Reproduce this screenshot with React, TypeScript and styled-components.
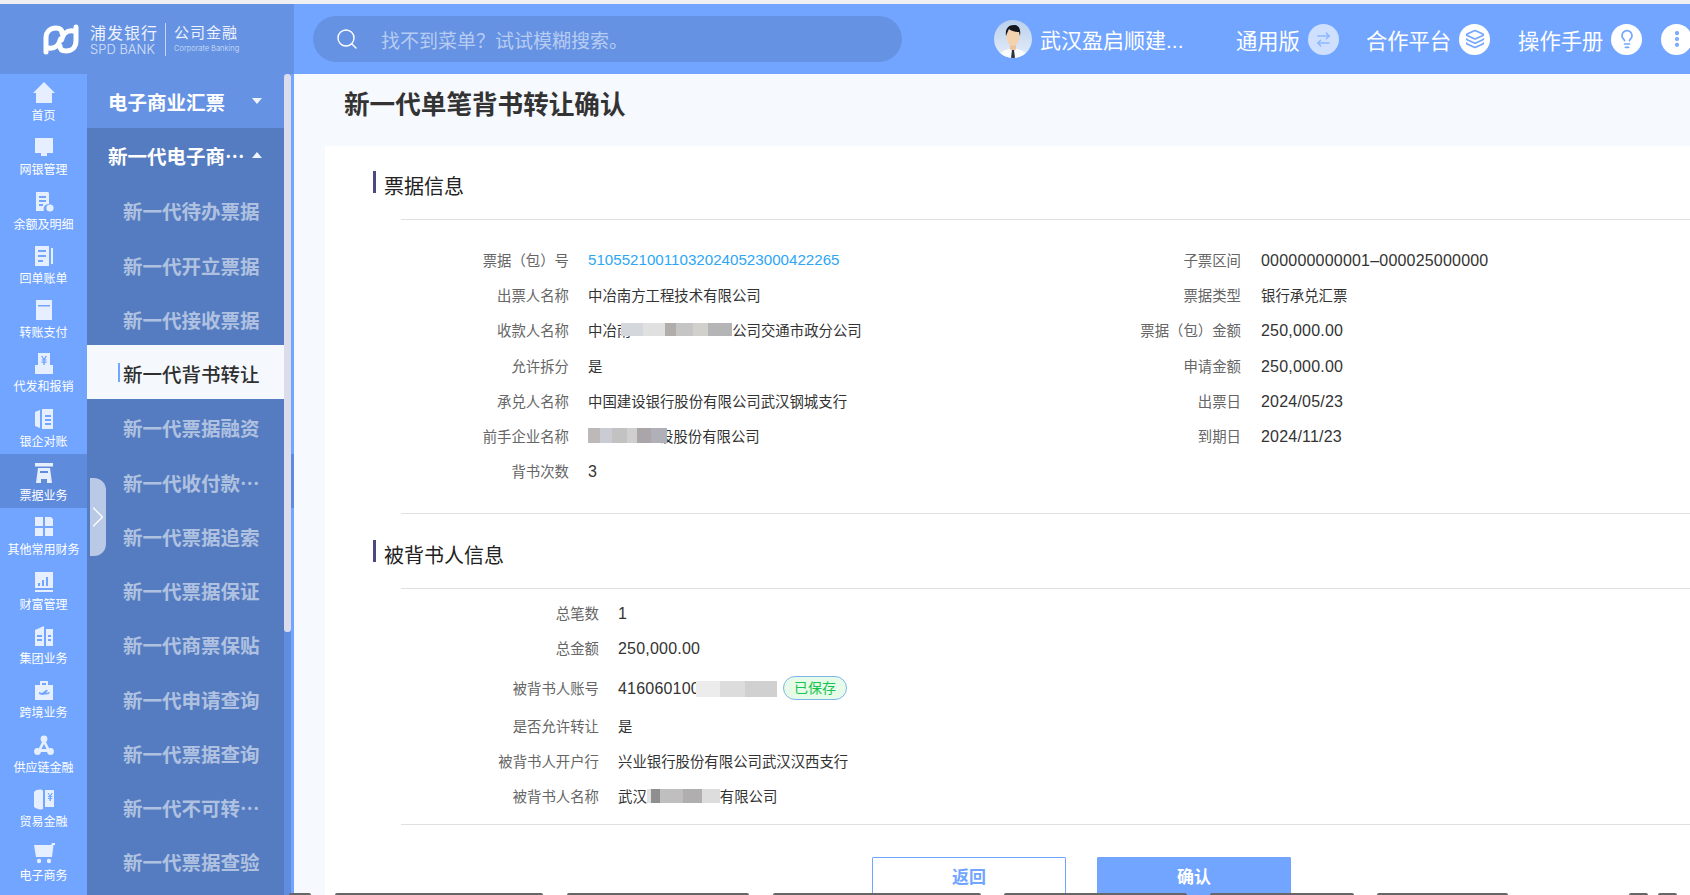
import React from 'react'
import styled, { createGlobalStyle } from 'styled-components'
import { ArrowRightLeft, ChevronRight, EllipsisVertical, Layers, Lightbulb, Search } from 'lucide-react'

const GlobalStyle = createGlobalStyle`
	html, body {
		margin: 0;
		padding: 0;
		background: #fff;
		font-family: 'Liberation Sans', 'Noto Sans CJK SC', sans-serif;
	}
`

const Page = styled.div`
	position: relative;
	width: 1690px;
	height: 895px;
	overflow: hidden;
	background: #fff;
`

const TopStrip = styled.div`
	height: 4px;
	background: #f0f0f2;
`

const Header = styled.header`
	display: flex;
	align-items: center;
	height: 70px;
	background: #72a5ff;
	color: #fff;
`

const LogoArea = styled.div`
	display: flex;
	align-items: center;
	flex: 0 0 294px;
	height: 100%;
	box-sizing: border-box;
	padding-left: 42px;
	background: #6592e3;
`

const LogoText = styled.div`
	display: flex;
	flex-direction: column;
	align-items: flex-start;
	margin-left: ${(p: { $left: number }) => p.$left}px;
`

const LogoCn = styled.span`
	font-family: 'Noto Sans CJK SC', sans-serif;
	font-size: ${(p: { $size: number }) => p.$size}px;
	line-height: 20px;
	letter-spacing: 1px;
	color: #eef3fd;
	white-space: nowrap;
`

const LogoEn = styled.span`
	font-family: 'Inter', 'Liberation Sans', sans-serif;
	font-size: ${(p: { $size: number }) => p.$size}px;
	font-weight: 300;
	line-height: 14px;
	color: #d5e1f8;
	white-space: nowrap;
`

const LogoDivider = styled.div`
	width: 1px;
	height: 33px;
	margin: 0 8px 0 7px;
	background: #c4d5f4;
`

const SearchBox = styled.div`
	display: flex;
	align-items: center;
	flex: 0 0 589px;
	height: 46px;
	box-sizing: border-box;
	margin-left: 19px;
	padding-left: 22px;
	border-radius: 23px;
	background: #6592e3;
	color: #fff;
`

const Placeholder = styled.span`
	margin-left: 22px;
	font-size: 19px;
	color: rgba(255, 255, 255, 0.55);
	white-space: nowrap;
`

const Avatar = styled.svg`
	flex: 0 0 38px;
	width: 38px;
	height: 38px;
	margin-left: 92px;
`

const UserName = styled.span`
	flex: 0 0 145px;
	margin-left: 8px;
	font-size: 21px;
	white-space: nowrap;
`

const HeaderLink = styled.div`
	display: flex;
	align-items: center;
	flex: none;
	gap: 8px;
	margin-left: ${(p: { $left: number }) => p.$left}px;
	font-size: 21.3px;
	white-space: nowrap;
`

const RoundIcon = styled.span`
	display: flex;
	align-items: center;
	justify-content: center;
	flex: 0 0 31px;
	width: 31px;
	height: 31px;
	border-radius: 50%;
	background: ${(p: { $soft?: boolean }) => (p.$soft ? '#cfe0ff' : '#fff')};
	color: ${(p: { $soft?: boolean }) => (p.$soft ? '#8fb6ff' : '#72a5ff')};
`

const Body = styled.div`
	display: flex;
	height: 821px;
`

const Rail = styled.nav`
	flex: 0 0 87px;
	background: #72a5ff;
`

const RailItem = styled.div`
	display: flex;
	flex-direction: column;
	align-items: center;
	height: 54.3px;
	box-sizing: border-box;
	padding-top: 7px;
	background: ${(p: { $active?: boolean }) => (p.$active ? '#5f8bdc' : 'transparent')};
	color: #fff;
	font-size: 12px;
	line-height: 22px;
	white-space: nowrap;
`

const RailIcon = styled.svg`
	display: block;
	flex: none;
	width: 24px;
	height: 24px;
	fill: #e6efff;
`

const SubMenu = styled.div`
	flex: 0 0 197px;
	background: #557cc0;
	font-family: 'Noto Sans CJK SC', sans-serif;
	font-size: 19.5px;
	font-weight: 700;
	white-space: nowrap;
`

const MenuHead = styled.div`
	display: flex;
	align-items: center;
	justify-content: space-between;
	height: ${(p: { $top?: boolean }) => (p.$top ? '54px' : '54.25px')};
	box-sizing: border-box;
	padding: 0 22px 0 21px;
	background: ${(p: { $top?: boolean }) => (p.$top ? '#6592e3' : 'transparent')};
	color: #fff;
`

const Caret = styled.i`
	width: 0;
	height: 0;
	border-left: 5.5px solid transparent;
	border-right: 5.5px solid transparent;
	border-top: ${(p: { $up?: boolean }) => (p.$up ? '0' : '6px solid #f0f4fc')};
	border-bottom: ${(p: { $up?: boolean }) => (p.$up ? '6px solid #f0f4fc' : '0')};
`

const MenuItem = styled.div`
	position: relative;
	height: 54.25px;
	padding-left: 36px;
	line-height: 58px;
	background: ${(p: { $active?: boolean }) => (p.$active ? '#f5f9fd' : 'transparent')};
	color: ${(p: { $active?: boolean }) => (p.$active ? '#2f2f2f' : 'rgba(255, 255, 255, 0.55)')};
	font-weight: ${(p: { $active?: boolean }) => (p.$active ? 500 : 700)};
`

const ActiveMark = styled.i`
	position: absolute;
	left: 31px;
	top: 18px;
	width: 2px;
	height: 19px;
	background: #72a5ff;
`

const ScrollTrack = styled.div`
	flex: 0 0 7px;
	background: #618ddf;
`

const ScrollThumb = styled.div`
	height: 558px;
	border-radius: 3px;
	background: #dcdcec;
`

const RailEdge = styled.div`
	flex: 0 0 3px;
	background: linear-gradient(#72a5ff 380px, #5f8bdc 380px, #5f8bdc 434px, #72a5ff 434px);
`

const CollapseHandle = styled.button`
	position: absolute;
	left: 90px;
	top: 478px;
	display: flex;
	align-items: center;
	justify-content: center;
	width: 16px;
	height: 78px;
	padding: 0;
	border: 0;
	border-radius: 0 12px 12px 0;
	background: #b9c9e6;
	color: #fff;

	svg {
		flex: none;
	}
`

const Main = styled.main`
	flex: 1;
	min-width: 0;
	background: #f6f9fe;
`

const PageTitle = styled.h1`
	margin: 0;
	height: 72px;
	box-sizing: border-box;
	padding: 13px 0 0 50px;
	font-size: 25.6px;
	line-height: 36px;
	font-weight: 700;
	color: #333;
`

const Panel = styled.div`
	height: 760px;
	margin-left: 31px;
	padding-top: 25px;
	box-sizing: border-box;
	background: #fff;
`

const SectionHead = styled.div`
	display: flex;
	height: 48px;
	box-sizing: border-box;
	margin-left: 48px;
`

const SectionMark = styled.i`
	flex: 0 0 3px;
	height: 22px;
	background: #4a4a80;
`

const SectionTitle = styled.h2`
	margin: 3px 0 0 8px;
	font-size: 20px;
	line-height: 26px;
	font-weight: 400;
	color: #222;
`

const Rule = styled.div`
	height: 1px;
	margin-left: 76px;
	margin-top: ${(p: { $top?: number }) => p.$top ?? 0}px;
	background: #e0e0e0;
`

const FieldGrid = styled.div`
	display: flex;
	margin-left: 76px;
	padding-top: 22px;
`

const FieldColumn = styled.div`
	flex: 0 0 672px;
`

const Field = styled.div`
	display: flex;
	align-items: center;
	height: ${(p: { $height?: number }) => p.$height ?? 35.2}px;
	margin: ${(p: { $tall?: boolean }) => (p.$tall ? '5px 0 3px' : '0')};
`

const FieldLabel = styled.span`
	flex: 0 0 ${(p: { $width: number }) => p.$width}px;
	text-align: right;
	font-size: 14.4px;
	color: #666;
`

const FieldValue = styled.span`
	display: flex;
	align-items: center;
	margin-left: ${(p: { $gap?: number }) => p.$gap ?? 19}px;
	padding-top: ${(p: { $num?: boolean }) => (p.$num ? '3px' : '0')};
	font-size: ${(p: { $num?: boolean }) => (p.$num ? '16px' : '14.4px')};
	letter-spacing: ${(p: { $num?: boolean }) => (p.$num ? '0.2px' : '0')};
	color: #333;
	white-space: nowrap;
`

const LinkValue = styled(FieldValue)`
	font-size: 15.15px;
	color: #2ea6f5;
`

const Mosaic = styled.i`
	position: relative;
	z-index: 1;
	display: inline-block;
	flex: none;
	width: ${(p: { $w: number }) => p.$w}px;
	height: ${(p: { $h: number }) => p.$h}px;
	margin-left: ${(p: { $ml?: number }) => p.$ml ?? 0}px;
	margin-right: ${(p: { $mr?: number }) => p.$mr ?? 0}px;
	background: ${(p: { $tones: string }) => p.$tones};
	filter: blur(0.7px);
`

const SavedBadge = styled.span`
	margin-left: 6px;
	width: 64px;
	height: 24px;
	box-sizing: border-box;
	border: 1px solid #7db6ee;
	border-radius: 12px;
	background: #e6fbe8;
	color: #16c44f;
	font-size: 14px;
	line-height: 22px;
	text-align: center;
`

const SubPanel = styled.div`
	padding: 6px 0 11px;
	margin-left: 76px;
`

const SectionGap = styled.div`
	height: 26px;
`

const Actions = styled.div`
	display: flex;
	gap: 31px;
	margin: 32px 0 0 547px;
`

const ActionButton = styled.button`
	width: 194px;
	height: 40px;
	padding: 0 0 4px;
	border: 1px solid #72a5ff;
	border-radius: 1px;
	background: ${(p: { $primary?: boolean }) => (p.$primary ? '#72a5ff' : '#fff')};
	color: ${(p: { $primary?: boolean }) => (p.$primary ? '#fff' : '#72a5ff')};
	font-family: 'Noto Sans CJK SC', sans-serif;
	font-size: 17px;
	font-weight: 700;
`

const PeekBar = styled.i`
	position: absolute;
	bottom: 0;
	left: ${(p: { $x: number; $w: number }) => p.$x}px;
	width: ${(p: { $x: number; $w: number }) => p.$w}px;
	height: 2px;
	border-radius: 3px 3px 0 0;
	background: #666;
`

const railIcons: Record<string, React.ReactNode> = {
	首页: <path d="M12 1 23 12h-3v10H4V12H1z" />,
	网银管理: <path d="M3 3h18v15h-6v3H9v-3H3z" />,
	余额及明细: (
		<>
			<path fillRule="evenodd" d="M4 2h12l1 1v11a5 5 0 0 0-5 7H4zm3 4v2h7V6zm0 4v2h7v-2zm0 4v2h4v-2z" />
			<circle cx="18" cy="18" r="3.6" />
		</>
	),
	回单账单: <path fillRule="evenodd" d="M3 2h14v20H3zm3 4v2h8V6zm0 5v2h8v-2zm0 5v2h5v-2zM19 4h2v16h-2z" />,
	转账支付: <path fillRule="evenodd" d="M4 2h16v20H4zm2 5v1.5h12V7z" />,
	代发和报销: (
		<path
			fillRule="evenodd"
			d="M6 1h12v12h3v9H3v-9h3zm3 3 2.2 3.4H9.500v1.200h1.900v1H9.500v1.200h1.900V13h1.400v-2.200h1.900V9.600h-1.900v-1h1.900V7.400h-1.700L15 4h-1.500L12 6.400 10.500 4z"
		/>
	),
	银企对账: <path fillRule="evenodd" d="M3 5l5-2v18l-5-2zM10 2h11v20H10zm3 6v2h6V8zm0 4v2h6v-2zm0 4v2h6v-2z" />,
	票据业务: <path fillRule="evenodd" d="M3 2h18v3.500H3zM6 7h12l2 15h-5v-4H9v4H4zm2 3v2h8v-2z" />,
	其他常用财务: <path d="M3 2h8v9H3zM13 2h6l2 2v7h-8zM3 13h8v8H3zM13 13h8v8h-8z" />,
	财富管理: <path fillRule="evenodd" d="M3 2h18v16H3zm3 11v3h2v-3zm4-3v6h2v-6zm4-3v9h2V7zM3 20h18v2H3z" />,
	集团业务: <path fillRule="evenodd" d="M3 6l9-4v20H3zm2 5v2h5v-2zm0 4v2h5v-2zm9-10h7v17h-7zm2 6v2h3v-2zm0 4v2h3v-2z" />,
	跨境业务: <path fillRule="evenodd" d="M8 3h8v4h5v15H3V7h5zm2 2v2h4V5zm-3 9 3 1 4-3h2l-2 3 4-1-1 2-7 1-3-1z" />,
	供应链金融: (
		<>
			<path d="M12 5 5 19h14zm0 6 2.500 5h-5z" fillRule="evenodd" />
			<circle cx="12" cy="6" r="3.400" />
			<circle cx="5.500" cy="18.500" r="3.400" />
			<circle cx="18.500" cy="18.500" r="3.400" />
		</>
	),
	贸易金融: (
		<path
			fillRule="evenodd"
			d="M2 5c3-3 8-3 9-1v18c-3 1-6 0-9-2zM13 3h9v17h-9zm2.500 3 2 3h-1.500v1h1.500v1h-1.500v1h1.500v2h1.400v-2h1.500v-1H18.900v-1h1.500V9H19l1.800-3h-1.400L18 8.400 16.800 6z"
		/>
	),
	电子商务: (
		<>
			<path d="M2 4h17l1-2h3v2h-1.500L20 16H4z" />
			<circle cx="7" cy="20" r="2.200" />
			<circle cx="17" cy="20" r="2.200" />
		</>
	),
}

const subItems = [
	'新一代待办票据',
	'新一代开立票据',
	'新一代接收票据',
	'新一代背书转让',
	'新一代票据融资',
	'新一代收付款…',
	'新一代票据追索',
	'新一代票据保证',
	'新一代商票保贴',
	'新一代申请查询',
	'新一代票据查询',
	'新一代不可转…',
	'新一代票据查验',
]

const billLeft = [
	{ label: '票据（包）号', link: '510552100110320240523000422265' },
	{ label: '出票人名称', value: '中冶南方工程技术有限公司' },
	{
		label: '收款人名称',
		value: (
			<>
				中冶南
				<Mosaic
					$w={111}
					$h={13}
					$ml={-10}
					$tones="linear-gradient(90deg, #d4d7db 0 20%, #e0e0e0 20% 40%, #b0adab 40% 50%, #c5c5c5 50% 65%, #d2d0cc 65% 78%, #b5b5b8 78% 100%)"
				/>
				公司交通市政分公司
			</>
		),
	},
	{ label: '允许拆分', value: '是' },
	{ label: '承兑人名称', value: '中国建设银行股份有限公司武汉钢城支行' },
	{
		label: '前手企业名称',
		value: (
			<>
				<Mosaic
					$w={79}
					$h={15}
					$mr={-8}
					$tones="linear-gradient(90deg, #bdb9b9 0 15%, #cbcbd3 15% 30%, #c2c2c2 30% 50%, #cfcfcf 50% 62%, #aaa5a8 62% 80%, #b0b0b8 80% 100%)"
				/>
				设股份有限公司
			</>
		),
	},
	{ label: '背书次数', num: '3' },
]

const billRight = [
	{ label: '子票区间', num: '000000000001–000025000000' },
	{ label: '票据类型', value: '银行承兑汇票' },
	{ label: '票据（包）金额', num: '250,000.00' },
	{ label: '申请金额', num: '250,000.00' },
	{ label: '出票日', num: '2024/05/23' },
	{ label: '到期日', num: '2024/11/23' },
]

const peeks = [
	[289, 22],
	[335, 208],
	[567, 182],
	[773, 208],
	[1004, 183],
	[1210, 144],
	[1377, 131],
	[1629, 19],
	[1658, 19],
]

type FieldData = { label: string; value?: React.ReactNode; num?: string; link?: string }

const FieldRow = ({ field, gap }: { field: FieldData; gap?: number }) => (
	<Field>
		<FieldLabel $width={168}>{field.label}</FieldLabel>
		{field.link && <LinkValue $gap={gap}>{field.link}</LinkValue>}
		{field.num && (
			<FieldValue $num $gap={gap}>
				{field.num}
			</FieldValue>
		)}
		{field.value && <FieldValue $gap={gap}>{field.value}</FieldValue>}
	</Field>
)

const SpdLogo = () => (
	<svg width="38" height="33" viewBox="0 0 38 33" fill="none" stroke="#fff" strokeWidth="5" strokeLinecap="round">
		<path d="M4 29V15C4 8 9 5 14 5c4 0 6 2 6 5" />
		<path d="M7 25c6 1 10-3 11.500-9" />
		<path d="M34 4v14c0 7-5 10-10 10-4 0-6-2-6-5" />
		<path d="M31 8c-6-1-10 3-11.500 9" />
	</svg>
)

const AccountAvatar = () => (
	<Avatar viewBox="0 0 38 38">
		<defs>
			<linearGradient id="avatarBg" x1="0" y1="0" x2="0" y2="1">
				<stop offset="0" stopColor="#b9d0ec" />
				<stop offset="1" stopColor="#e6eef9" />
			</linearGradient>
			<clipPath id="avatarClip">
				<circle cx="19" cy="19" r="19" />
			</clipPath>
		</defs>
		<g clipPath="url(#avatarClip)">
			<rect width="38" height="38" fill="url(#avatarBg)" />
			<path d="M4 38c1-6 7-8 11-9h8c4 1 10 3 11 9z" fill="#fbfbfb" />
			<path d="M16 22h6v7l-3 3-3-3z" fill="#eec39c" />
			<ellipse cx="19" cy="17" rx="6.500" ry="9" fill="#f5d2ae" />
			<path d="M12 16c-1-7 2-11 8-11 5 0 7 4 6 11l-1-4c-4 0-8-1-10-3-1 2-2 4-3 7z" fill="#15171c" />
			<path d="M18 30h2l1 8h-4z" fill="#2b3440" />
		</g>
	</Avatar>
)

export default function App() {
	return (
		<Page>
			<GlobalStyle />
			<TopStrip />
			<Header>
				<LogoArea>
					<SpdLogo />
					<LogoText $left={10}>
						<LogoCn $size={16}>浦发银行</LogoCn>
						<LogoEn $size={13}>SPD BANK</LogoEn>
					</LogoText>
					<LogoDivider />
					<LogoText $left={0}>
						<LogoCn $size={15}>公司金融</LogoCn>
						<LogoEn $size={7.5}>Corporate Banking</LogoEn>
					</LogoText>
				</LogoArea>
				<SearchBox>
					<Search size={24} strokeWidth={1.4} />
					<Placeholder>找不到菜单？试试模糊搜索。</Placeholder>
				</SearchBox>
				<AccountAvatar />
				<UserName>武汉盈启顺建...</UserName>
				<HeaderLink $left={51}>
					通用版
					<RoundIcon $soft>
						<ArrowRightLeft size={17} strokeWidth={2} />
					</RoundIcon>
				</HeaderLink>
				<HeaderLink $left={27}>
					合作平台
					<RoundIcon>
						<Layers size={20} strokeWidth={2} />
					</RoundIcon>
				</HeaderLink>
				<HeaderLink $left={28}>
					操作手册
					<RoundIcon>
						<Lightbulb size={20} strokeWidth={2} />
					</RoundIcon>
				</HeaderLink>
				<HeaderLink $left={19}>
					<RoundIcon>
						<EllipsisVertical size={20} strokeWidth={3} />
					</RoundIcon>
				</HeaderLink>
			</Header>
			<Body>
				<Rail>
					{Object.keys(railIcons).map((label) => (
						<RailItem key={label} $active={label === '票据业务'}>
							<RailIcon viewBox="0 0 24 24">{railIcons[label]}</RailIcon>
							{label}
						</RailItem>
					))}
				</Rail>
				<SubMenu>
					<MenuHead $top>
						电子商业汇票
						<Caret />
					</MenuHead>
					<MenuHead>
						新一代电子商…
						<Caret $up />
					</MenuHead>
					{subItems.map((item) => (
						<MenuItem key={item} $active={item === '新一代背书转让'}>
							{item === '新一代背书转让' && <ActiveMark />}
							{item}
						</MenuItem>
					))}
				</SubMenu>
				<ScrollTrack>
					<ScrollThumb />
				</ScrollTrack>
				<RailEdge />
				<Main>
					<PageTitle>新一代单笔背书转让确认</PageTitle>
					<Panel>
						<SectionHead>
							<SectionMark />
							<SectionTitle>票据信息</SectionTitle>
						</SectionHead>
						<Rule />
						<FieldGrid>
							<FieldColumn>
								{billLeft.map((field) => (
									<FieldRow key={field.label} field={field} />
								))}
							</FieldColumn>
							<FieldColumn>
								{billRight.map((field) => (
									<FieldRow key={field.label} field={field} gap={20} />
								))}
							</FieldColumn>
						</FieldGrid>
						<Rule $top={25} />
						<SectionGap />
						<SectionHead>
							<SectionMark />
							<SectionTitle>被背书人信息</SectionTitle>
						</SectionHead>
						<Rule />
						<SubPanel>
							<Field $height={35}>
								<FieldLabel $width={198}>总笔数</FieldLabel>
								<FieldValue $num>1</FieldValue>
							</Field>
							<Field $height={35}>
								<FieldLabel $width={198}>总金额</FieldLabel>
								<FieldValue $num>250,000.00</FieldValue>
							</Field>
							<Field $height={35} $tall>
								<FieldLabel $width={198}>被背书人账号</FieldLabel>
								<FieldValue $num>
									416060100
									<Mosaic
										$w={81}
										$h={16}
										$ml={-4}
										$tones="linear-gradient(90deg, #ececec 0 30%, #dcdcdc 30% 60%, #d0d0d0 60% 100%)"
									/>
								</FieldValue>
								<SavedBadge>已保存</SavedBadge>
							</Field>
							<Field $height={35}>
								<FieldLabel $width={198}>是否允许转让</FieldLabel>
								<FieldValue>是</FieldValue>
							</Field>
							<Field $height={35}>
								<FieldLabel $width={198}>被背书人开户行</FieldLabel>
								<FieldValue>兴业银行股份有限公司武汉汉西支行</FieldValue>
							</Field>
							<Field $height={35}>
								<FieldLabel $width={198}>被背书人名称</FieldLabel>
								<FieldValue>
									武汉
									<Mosaic
										$w={73}
										$h={14}
										$tones="linear-gradient(90deg, #e2e2e2 0 6%, #8f8f8f 6% 18%, #c0bfbf 18% 50%, #b0aeae 50% 75%, #dddddd 75% 100%)"
									/>
									有限公司
								</FieldValue>
							</Field>
						</SubPanel>
						<Rule />
						<Actions>
							<ActionButton>返回</ActionButton>
							<ActionButton $primary>确认</ActionButton>
						</Actions>
					</Panel>
				</Main>
			</Body>
			<CollapseHandle>
				<ChevronRight size={36} strokeWidth={0.8} />
			</CollapseHandle>
			{peeks.map(([x, w]) => (
				<PeekBar key={x} $x={x} $w={w} />
			))}
		</Page>
	)
}
